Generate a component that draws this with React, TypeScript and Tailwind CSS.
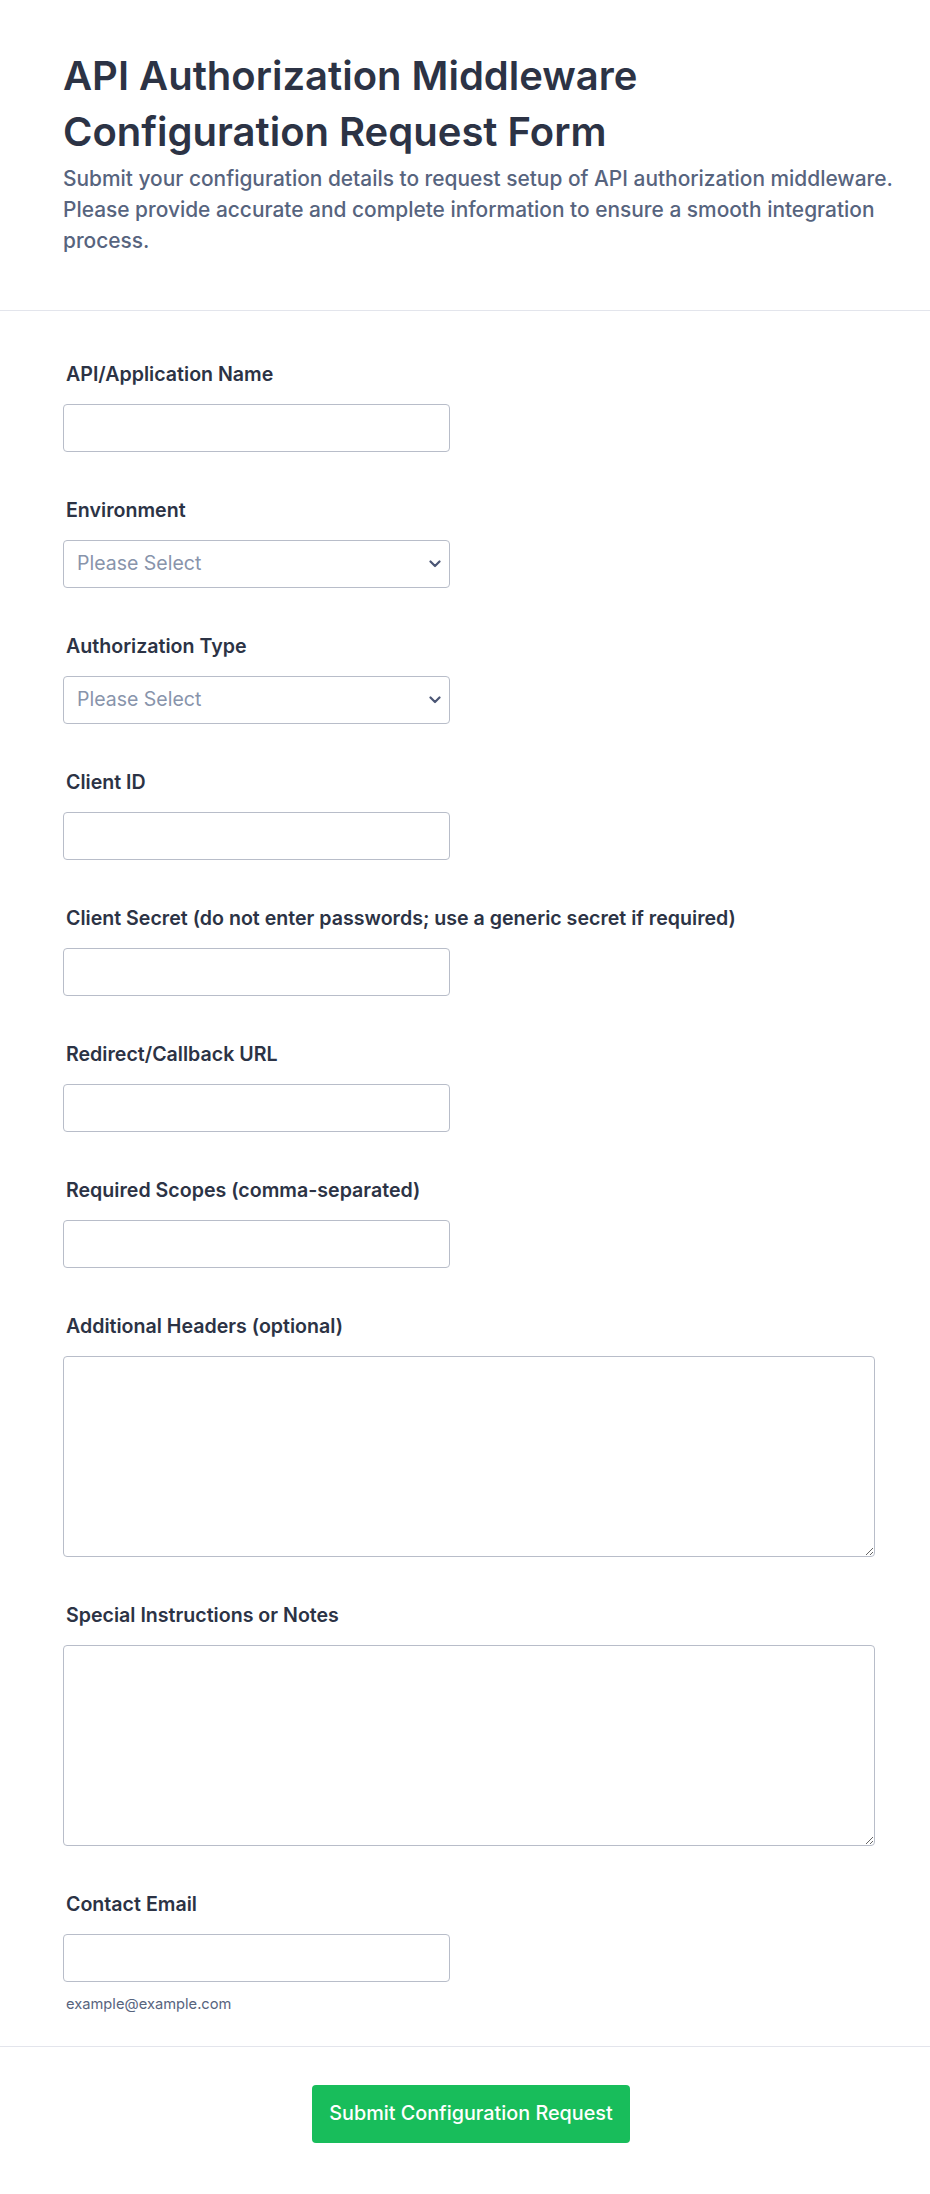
import type { FC } from "react";

const labelCls =
  "block pl-[3px] text-[19.6px] leading-6 font-semibold text-[#2c3345] mb-[18px]";
const boxCls =
  "w-[387px] h-[48px] rounded-[4px] border border-[#b8bdc9] bg-white";

const TextField: FC<{ label: string }> = ({ label }) => (
  <div>
    <label className={labelCls}>{label}</label>
    <input type="text" className={`${boxCls} px-3 outline-none`} />
  </div>
);

const SelectField: FC<{ label: string }> = ({ label }) => (
  <div>
    <label className={labelCls}>{label}</label>
    <div className={`${boxCls} flex items-center justify-between pl-[13px] pr-[8px]`}>
      <span className="text-[19.5px] text-[#8894ab]">Please Select</span>
      <svg width="12" height="8" viewBox="0 0 12 8" fill="none">
        <path
          d="M1.5 1.5L6 6L10.5 1.5"
          stroke="#4b5675"
          strokeWidth="2.2"
          strokeLinecap="round"
          strokeLinejoin="round"
        />
      </svg>
    </div>
  </div>
);

const AreaField: FC<{ label: string }> = ({ label }) => (
  <div>
    <label className={labelCls}>{label}</label>
    <textarea className="block w-[812px] h-[201px] rounded-[4px] border border-[#b8bdc9] bg-white px-3 py-2 outline-none" />
  </div>
);

export default function App() {
  return (
    <div className="min-h-screen bg-white font-['Inter',sans-serif]">
      <header className="pl-[63px] pr-[16px] pt-[48px] pb-[54px] border-b border-[#e3e5ec]">
        <h1 className="text-[40px] leading-[56px] font-semibold text-[#2c3345]">
          API Authorization Middleware
          <br />
          Configuration Request Form
        </h1>
        <p className="mt-[3px] text-[20.9px] leading-[31px] font-medium text-[#57647e]">
          Submit your configuration details to request setup of API authorization
          middleware. Please provide accurate and complete information to ensure
          a smooth integration process.
        </p>
      </header>

      <main className="px-[63px] pt-[51px] pb-[32px] flex flex-col gap-[46px]">
        <TextField label="API/Application Name" />
        <SelectField label="Environment" />
        <SelectField label="Authorization Type" />
        <TextField label="Client ID" />
        <TextField label="Client Secret (do not enter passwords; use a generic secret if required)" />
        <TextField label="Redirect/Callback URL" />
        <TextField label="Required Scopes (comma-separated)" />
        <AreaField label="Additional Headers (optional)" />
        <AreaField label="Special Instructions or Notes" />
        <div>
          <label className={labelCls}>Contact Email</label>
          <input type="email" className={`${boxCls} px-3 outline-none`} />
          <p className="mt-[12px] pl-[3px] text-[14.7px] leading-5 text-[#57647e]">
            example@example.com
          </p>
        </div>
      </main>

      <footer className="border-t border-[#e3e5ec] pl-[12px] pt-[38px] pb-[51px] flex justify-center">
        <button className="h-[58px] px-[17px] rounded-[4px] bg-[#18bd5b] text-white text-[19.8px] font-medium">
          Submit Configuration Request
        </button>
      </footer>
    </div>
  );
}
